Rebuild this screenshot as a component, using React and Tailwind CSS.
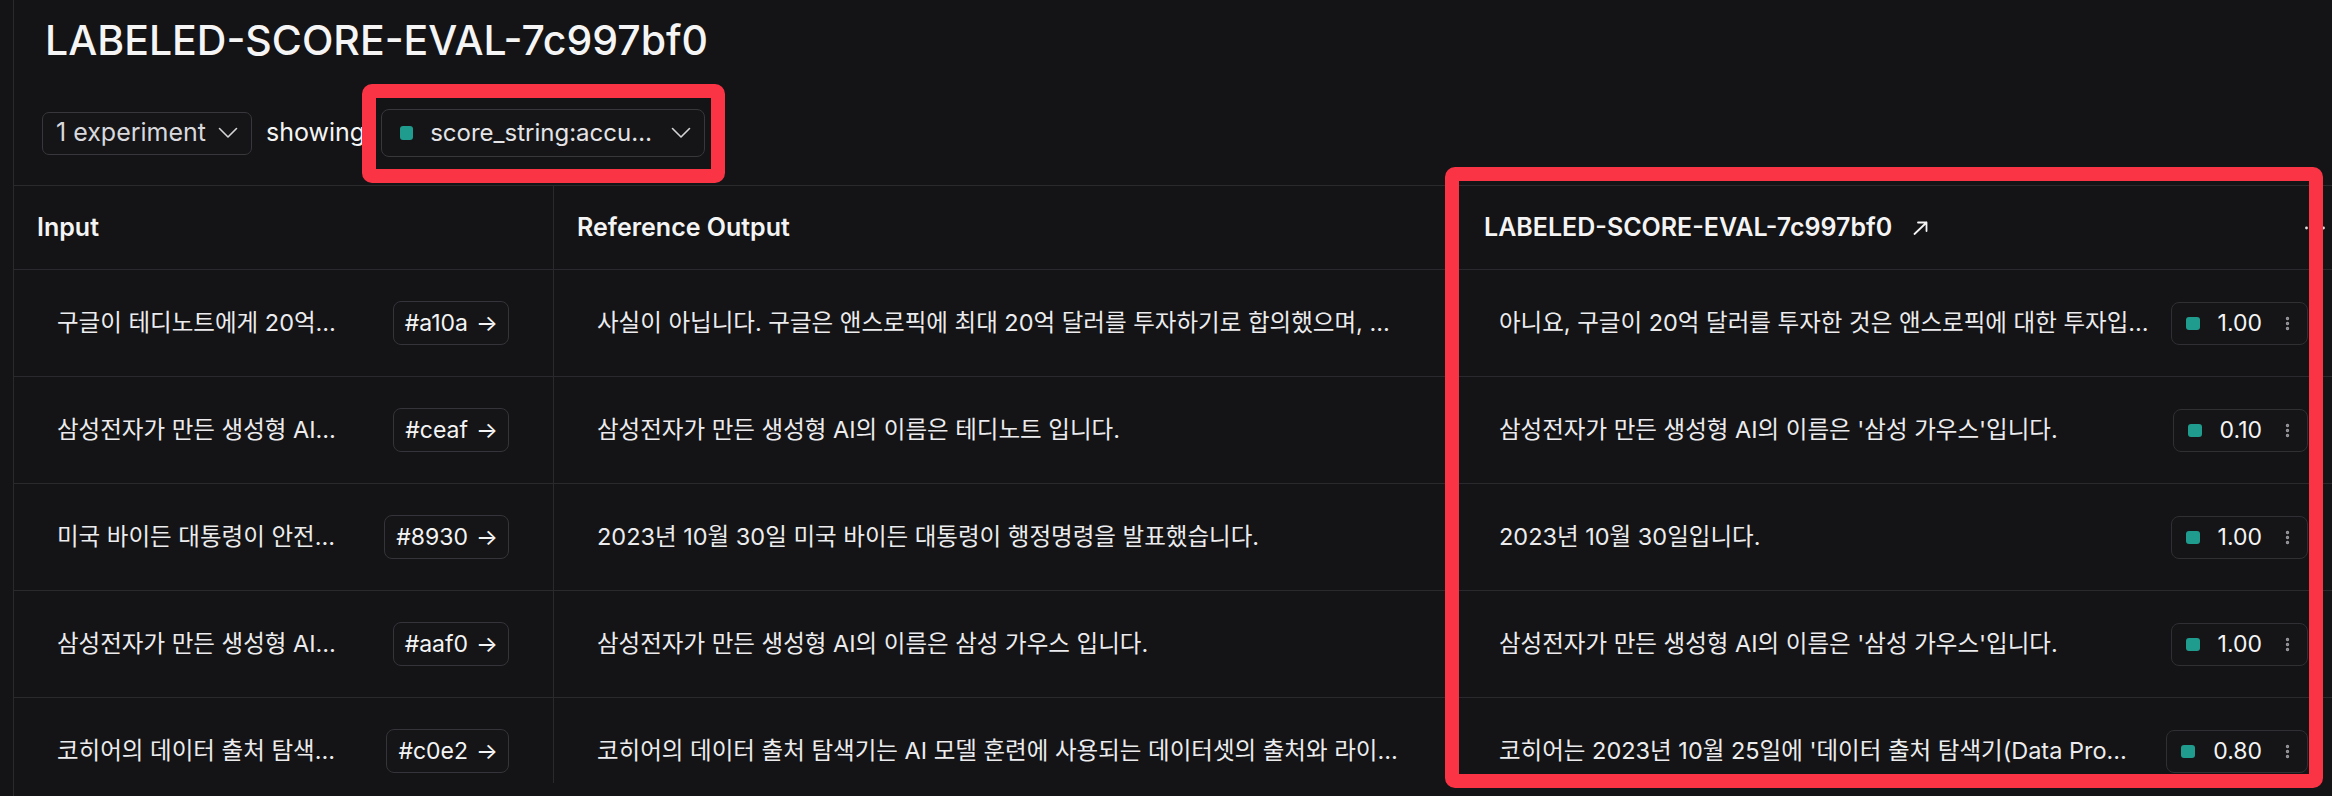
import { EllipsisVertical } from 'lucide-react';

const rows = [
  {
    input: '구글이 테디노트에게 20억…',
    id: '#a10a',
    reference: '사실이 아닙니다. 구글은 앤스로픽에 최대 20억 달러를 투자하기로 합의했으며, …',
    output: '아니요, 구글이 20억 달러를 투자한 것은 앤스로픽에 대한 투자입…',
    score: '1.00',
  },
  {
    input: '삼성전자가 만든 생성형 AI…',
    id: '#ceaf',
    reference: '삼성전자가 만든 생성형 AI의 이름은 테디노트 입니다.',
    output: "삼성전자가 만든 생성형 AI의 이름은 '삼성 가우스'입니다.",
    score: '0.10',
  },
  {
    input: '미국 바이든 대통령이 안전…',
    id: '#8930',
    reference: '2023년 10월 30일 미국 바이든 대통령이 행정명령을 발표했습니다.',
    output: '2023년 10월 30일입니다.',
    score: '1.00',
  },
  {
    input: '삼성전자가 만든 생성형 AI…',
    id: '#aaf0',
    reference: '삼성전자가 만든 생성형 AI의 이름은 삼성 가우스 입니다.',
    output: "삼성전자가 만든 생성형 AI의 이름은 '삼성 가우스'입니다.",
    score: '1.00',
  },
  {
    input: '코히어의 데이터 출처 탐색…',
    id: '#c0e2',
    reference: '코히어의 데이터 출처 탐색기는 AI 모델 훈련에 사용되는 데이터셋의 출처와 라이…',
    output: "코히어는 2023년 10월 25일에 '데이터 출처 탐색기(Data Pro…",
    score: '0.80',
  },
];

function Chevron() {
  return (
    <svg width="20" height="12" viewBox="0 0 20 12" fill="none" className="shrink-0">
      <path d="M1.5 1.5 L10 10 L18.5 1.5" stroke="#d4d4d8" strokeWidth="1.6" strokeLinecap="round" strokeLinejoin="round" />
    </svg>
  );
}

function ScoreBadge({ score }) {
  return (
    <div className="flex h-[43px] shrink-0 items-center rounded-[8px] border border-[#2f2f34] bg-[#151517] pl-[14px] pr-[11px]">
      <span className="h-[13px] w-[14px] rounded-[3px] bg-[#1f9c8e]" />
      <span className="ml-[18px] text-[23px] text-[#f4f4f5]">{score}</span>
      <EllipsisVertical size={17} strokeWidth={2.8} className="ml-[17px] text-[#9a9aa1]" />
    </div>
  );
}

export default function App() {
  return (
    <div className="relative h-[796px] w-full overflow-hidden bg-[#141416] font-['Inter','Noto_Sans_CJK_KR',sans-serif] text-[#ececee]">
      <div className="ml-[13px] flex h-full flex-col border-l border-[#2a2a2e]">
        <h1 className="pl-[31px] pt-[15px] text-[41px] font-medium leading-[50px] text-[#f5f5f5]">
          LABELED-SCORE-EVAL-7c997bf0
        </h1>

        <div className="mt-[44px] flex h-[48px] items-center pl-[28px]">
          <div className="flex h-[43px] items-center gap-[12px] rounded-[7px] border border-[#37373c] bg-[#151517] pl-[13px] pr-[13px] text-[25px] text-[#d9d9dd]">
            <span>1 experiment</span>
            <Chevron />
          </div>
          <span className="ml-[14px] text-[25px] text-[#f4f4f5]">showing</span>
          <div className="ml-[16px] flex h-[48px] w-[324px] items-center rounded-[8px] border border-[#37373c] bg-[#151517] pl-[18px] pr-[13px] text-[24px] text-[#e4e4e7]">
            <span className="h-[14px] w-[13px] rounded-[3px] bg-[#1f9c8e]" />
            <span className="ml-[17px] flex-1">score_string:accu…</span>
            <Chevron />
          </div>
        </div>

        <div className="mt-[28px] h-[598px] overflow-hidden border-t border-[#2a2a2e]">
          <div className="grid w-[2340px] grid-cols-[540px_900px_900px]">
            <div className="flex h-[84px] items-center border-b border-r border-[#2a2a2e] pl-[23px] text-[25px] font-semibold text-[#f4f4f5]">
              Input
            </div>
            <div className="flex h-[84px] items-center border-b border-r border-[#2a2a2e] pl-[23px] text-[25px] font-semibold text-[#f4f4f5]">
              Reference Output
            </div>
            <div className="flex h-[84px] items-center border-b border-[#2a2a2e] pl-[30px] pr-[28px] text-[25px] font-semibold text-[#f4f4f5]">
              <span>LABELED-SCORE-EVAL-7c997bf0</span>
              <svg width="16" height="14" viewBox="0 0 16 14" fill="none" className="ml-[21px]">
                <path d="M1.5 13 L13.5 1.5 M5 1.5 H13.5 V10" stroke="#f4f4f5" strokeWidth="1.8" strokeLinecap="round" strokeLinejoin="round" />
              </svg>
              <svg width="22" height="4" viewBox="0 0 22 4" className="ml-auto">
                <circle cx="2.5" cy="2" r="1.4" fill="#e4e4e7" />
                <circle cx="11" cy="2" r="1.4" fill="#e4e4e7" />
                <circle cx="19.5" cy="2" r="1.4" fill="#e4e4e7" />
              </svg>
            </div>

            {rows.map((row, i) => (
              <div key={i} className="contents">
                <div className="flex h-[107px] items-center justify-between gap-[12px] border-b border-r border-[#2a2a2e] pl-[43px] pr-[44px] text-[23.5px]">
                  <span className="min-w-0 truncate">{row.input}</span>
                  <span className="flex h-[44px] shrink-0 items-center rounded-[8px] border border-[#34343a] bg-[#151517] pl-[11px] pr-[10px] text-[23px] text-[#f4f4f5]">
                    {row.id}
                    <span className="ml-[8px]">→</span>
                  </span>
                </div>
                <div className="flex h-[107px] items-center border-b border-r border-[#2a2a2e] pl-[43px] pr-[36px] text-[23.5px]">
                  <span className="min-w-0 truncate">{row.reference}</span>
                </div>
                <div className="flex h-[107px] items-center gap-[8px] border-b border-[#2a2a2e] pl-[45px] pr-[46px] text-[23.5px]">
                  <span className="min-w-0 flex-1 truncate">{row.output}</span>
                  <ScoreBadge score={row.score} />
                </div>
              </div>
            ))}
          </div>
        </div>
      </div>

      {/* annotation boxes */}
      <div className="pointer-events-none absolute left-[362px] top-[84px] h-[99px] w-[363px] rounded-[10px] border-[14px] border-[#fa3445]" />
      <div className="pointer-events-none absolute left-[1445px] top-[167px] h-[621px] w-[878px] rounded-[10px] border-[14px] border-[#fa3445]" />
    </div>
  );
}
